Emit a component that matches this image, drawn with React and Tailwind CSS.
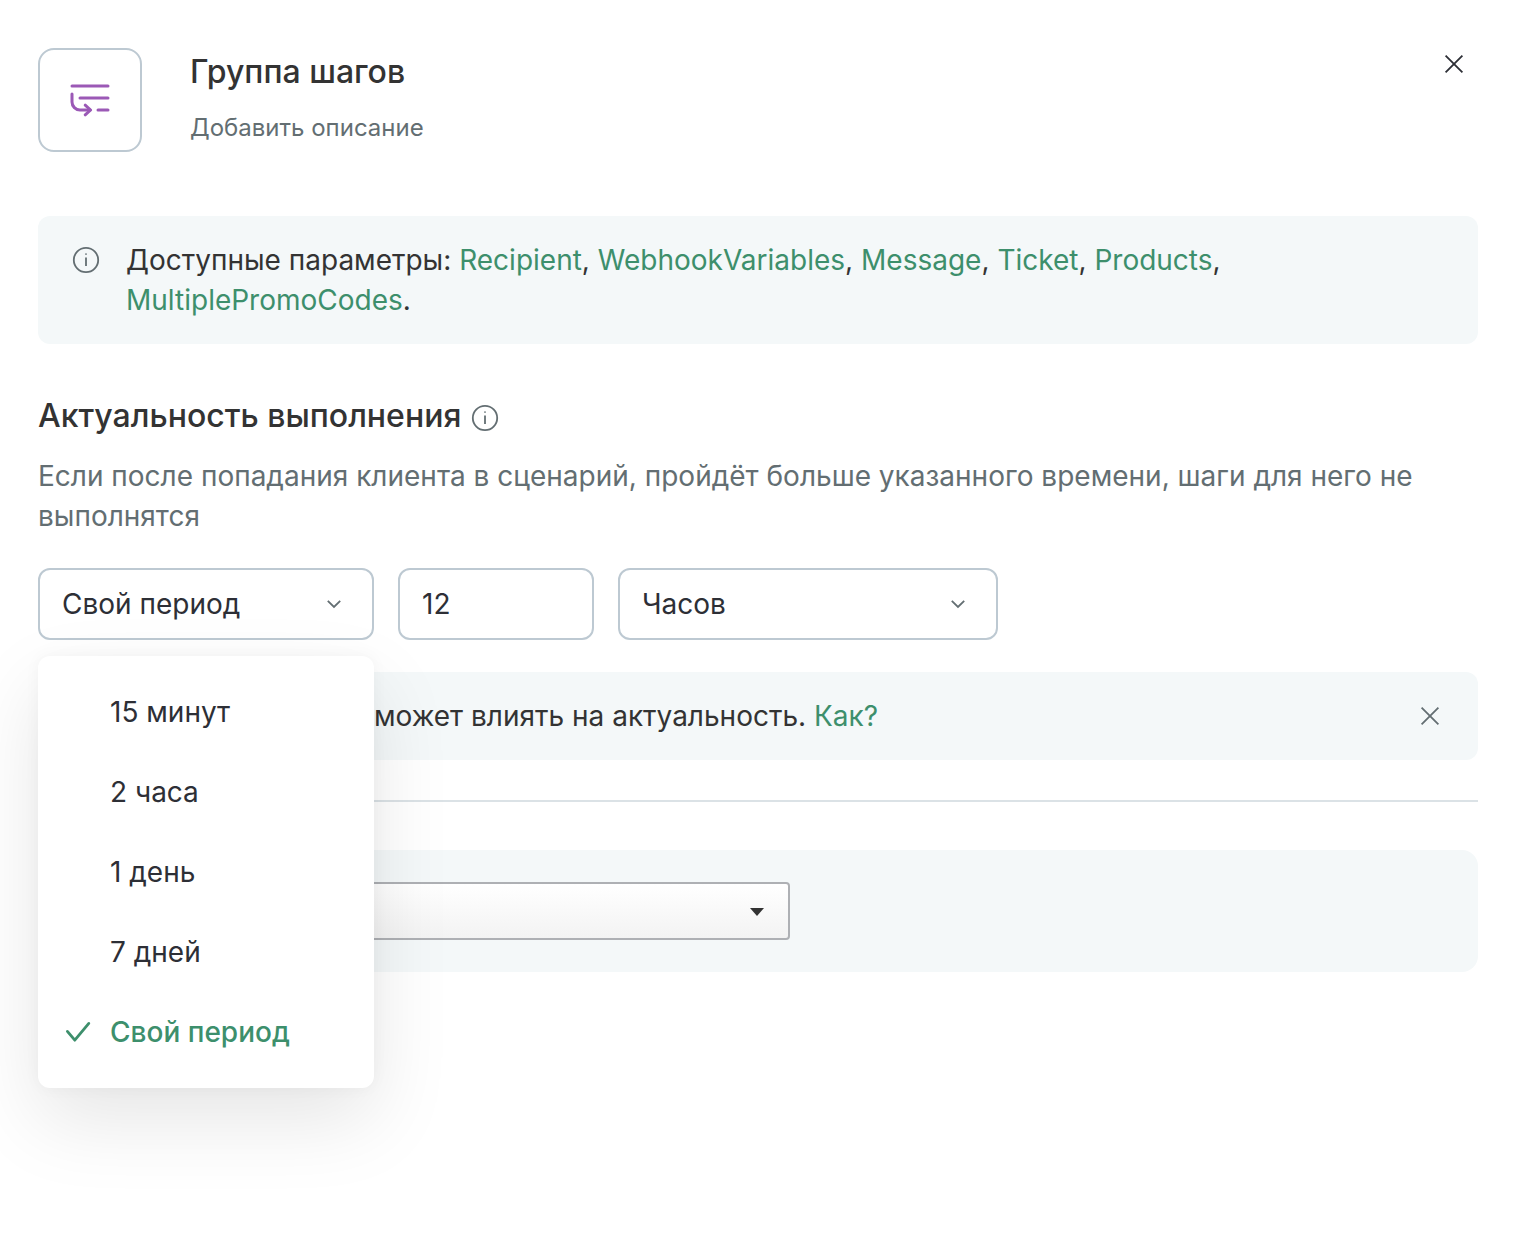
import React, { useState } from "react";

const PARAMS = ["Recipient", "WebhookVariables", "Message", "Ticket", "Products", "MultiplePromoCodes"];

const PERIODS = ["15 минут", "2 часа", "1 день", "7 дней", "Свой период"];

const InfoIcon = () => (
  <svg className="w-7 h-7 shrink-0 text-[#636e72]" viewBox="0 0 28 28" fill="none" stroke="currentColor">
    <circle cx="14" cy="14" r="12.2" strokeWidth="1.8" />
    <path d="M14 11.6v8.4" strokeWidth="1.8" />
    <path d="M14 7.2v1.8" strokeWidth="1.8" strokeOpacity="0.7" />
  </svg>
);

const CloseIcon = () => (
  <svg className="w-7 h-7" viewBox="0 0 28 28" fill="none" stroke="currentColor" strokeWidth="1.8">
    <path d="M5.6 5.6l16.8 16.8M22.4 5.6L5.6 22.4" />
  </svg>
);

const ChevronIcon = ({ className }) => (
  <svg className={className} viewBox="0 0 16 16" fill="none" stroke="currentColor" strokeWidth="1.8">
    <path d="M1.8 4.8L8 11l6.2-6.2" />
  </svg>
);

const StepsIcon = () => (
  <svg
    className="w-12 h-12"
    viewBox="0 0 48 48"
    fill="none"
    stroke="#9b59b6"
    strokeWidth="3"
    strokeLinecap="round"
    strokeLinejoin="round"
  >
    <path d="M6 10h36M14 22h28M32 34h10" />
    <path d="M6 18v8a8 8 0 0 0 8 8h10" />
    <path d="M19.2 29.2L24.6 34l-5.4 4.8" />
  </svg>
);

const App = () => {
  const [period, setPeriod] = useState("Свой период");
  const [open, setOpen] = useState(true);

  return (
    <div className="min-h-screen bg-white px-[38px] py-12 font-['Inter',sans-serif] text-[28px] leading-10 text-[#333]">
      {/* Header */}
      <header className="flex items-start gap-12">
        <div className="w-26 h-26 shrink-0 flex items-center justify-center rounded-2xl border-2 border-[#bdc9d2]">
          <StepsIcon />
        </div>
        <div className="flex-1 flex flex-col items-start gap-2">
          <h1 className="text-[32px] leading-12 font-medium">Группа шагов</h1>
          <button type="button" className="text-2xl leading-12 text-[#636e72]">
            Добавить описание
          </button>
        </div>
        <button type="button" aria-label="Закрыть" className="mt-0.5 mr-2.5 text-[#2d2f36]">
          <CloseIcon />
        </button>
      </header>

      {/* Available parameters */}
      <div className="mt-16 flex gap-[26px] rounded-xl bg-[#f4f8f9] py-6 pl-[34px] pr-16">
        <div className="h-10 flex items-center">
          <InfoIcon />
        </div>
        <p>
          Доступные параметры:{" "}
          {PARAMS.map((name, i) => (
            <React.Fragment key={name}>
              <a href="#" className="text-[#3d8f6c]">{name}</a>
              {i < PARAMS.length - 1 ? ", " : "."}
            </React.Fragment>
          ))}
        </p>
      </div>

      {/* Relevance */}
      <section className="mt-12">
        <div className="flex items-center gap-2.5">
          <h2 className="text-[32px] leading-12 font-medium">Актуальность выполнения</h2>
          <span className="pt-1">
            <InfoIcon />
          </span>
        </div>
        <p className="mt-4 text-[#636e72]">
          Если после попадания клиента в сценарий, пройдёт больше указанного времени, шаги для него не выполнятся
        </p>

        <div className="mt-8 flex gap-6 text-[#2d2f36]">
          <div className="relative w-84">
            <button
              type="button"
              aria-haspopup="listbox"
              aria-expanded={open}
              onClick={() => setOpen(!open)}
              className="w-full h-18 flex items-center justify-between rounded-xl border-2 border-[#bdc9d2] bg-white pl-[22px] pr-[30px]"
            >
              {period}
              <ChevronIcon className="w-4 h-4 text-[#636e72]" />
            </button>

            {open && (
              <ul
                role="listbox"
                aria-label="Период"
                className="absolute z-10 top-full left-0 w-full mt-4 py-4 rounded-xl bg-white shadow-[0_32px_80px_rgba(0,0,0,0.1),0_0_16px_rgba(0,0,0,0.04)]"
              >
                {PERIODS.map((item) => (
                  <li key={item} role="option" aria-selected={item === period}>
                    <button
                      type="button"
                      onClick={() => {
                        setPeriod(item);
                        setOpen(false);
                      }}
                      className={`w-full h-20 flex items-center gap-4 pl-6 text-left ${
                        item === period ? "font-medium text-[#3d8f6c]" : ""
                      }`}
                    >
                      <span className="w-8 flex justify-center">
                        {item === period && (
                          <svg className="w-8 h-8" viewBox="0 0 32 32" fill="none" stroke="currentColor" strokeWidth="2.8" strokeLinecap="round" strokeLinejoin="round">
                            <path d="M5.4 15.4l7.4 8.8L26.8 7.4" />
                          </svg>
                        )}
                      </span>
                      {item}
                    </button>
                  </li>
                ))}
              </ul>
            )}
          </div>

          <input
            type="text"
            aria-label="Количество"
            defaultValue="12"
            className="w-49 h-18 rounded-xl border-2 border-[#bdc9d2] bg-white px-[22px]"
          />

          <div className="relative w-95">
            <select
              aria-label="Единица времени"
              className="w-full h-18 appearance-none rounded-xl border-2 border-[#bdc9d2] bg-white px-[22px]"
            >
              <option>Часов</option>
            </select>
            <ChevronIcon className="absolute right-8 top-7 w-4 h-4 pointer-events-none text-[#636e72]" />
          </div>
        </div>
      </section>

      {/* Notice */}
      <div className="mt-8 flex items-center justify-between rounded-xl bg-[#f4f8f9] py-6 pl-84 pr-[34px]">
        <p>
          может влиять на актуальность. <a href="#" className="text-[#3d8f6c]">Как?</a>
        </p>
        <button type="button" aria-label="Скрыть" className="text-[#636e72]">
          <CloseIcon />
        </button>
      </div>

      <hr className="mt-10 border-t-2 border-[#dbe2e6]" />

      {/* Step picker */}
      <div className="mt-12 rounded-2xl bg-[#f4f8f9] p-8">
        <div className="relative w-180">
          <select
            aria-label="Шаг"
            className="block w-full h-[58px] appearance-none rounded-sm border-2 border-[#aeb0b4] bg-linear-to-b from-white to-[#f3f3f3] px-4"
          >
            <option></option>
          </select>
          <svg className="absolute right-[26px] top-[26px] w-3.5 h-2 pointer-events-none" viewBox="0 0 14 8" fill="#333">
            <path d="M0 0h14L7 8z" />
          </svg>
        </div>
      </div>
    </div>
  );
};

export default App;
